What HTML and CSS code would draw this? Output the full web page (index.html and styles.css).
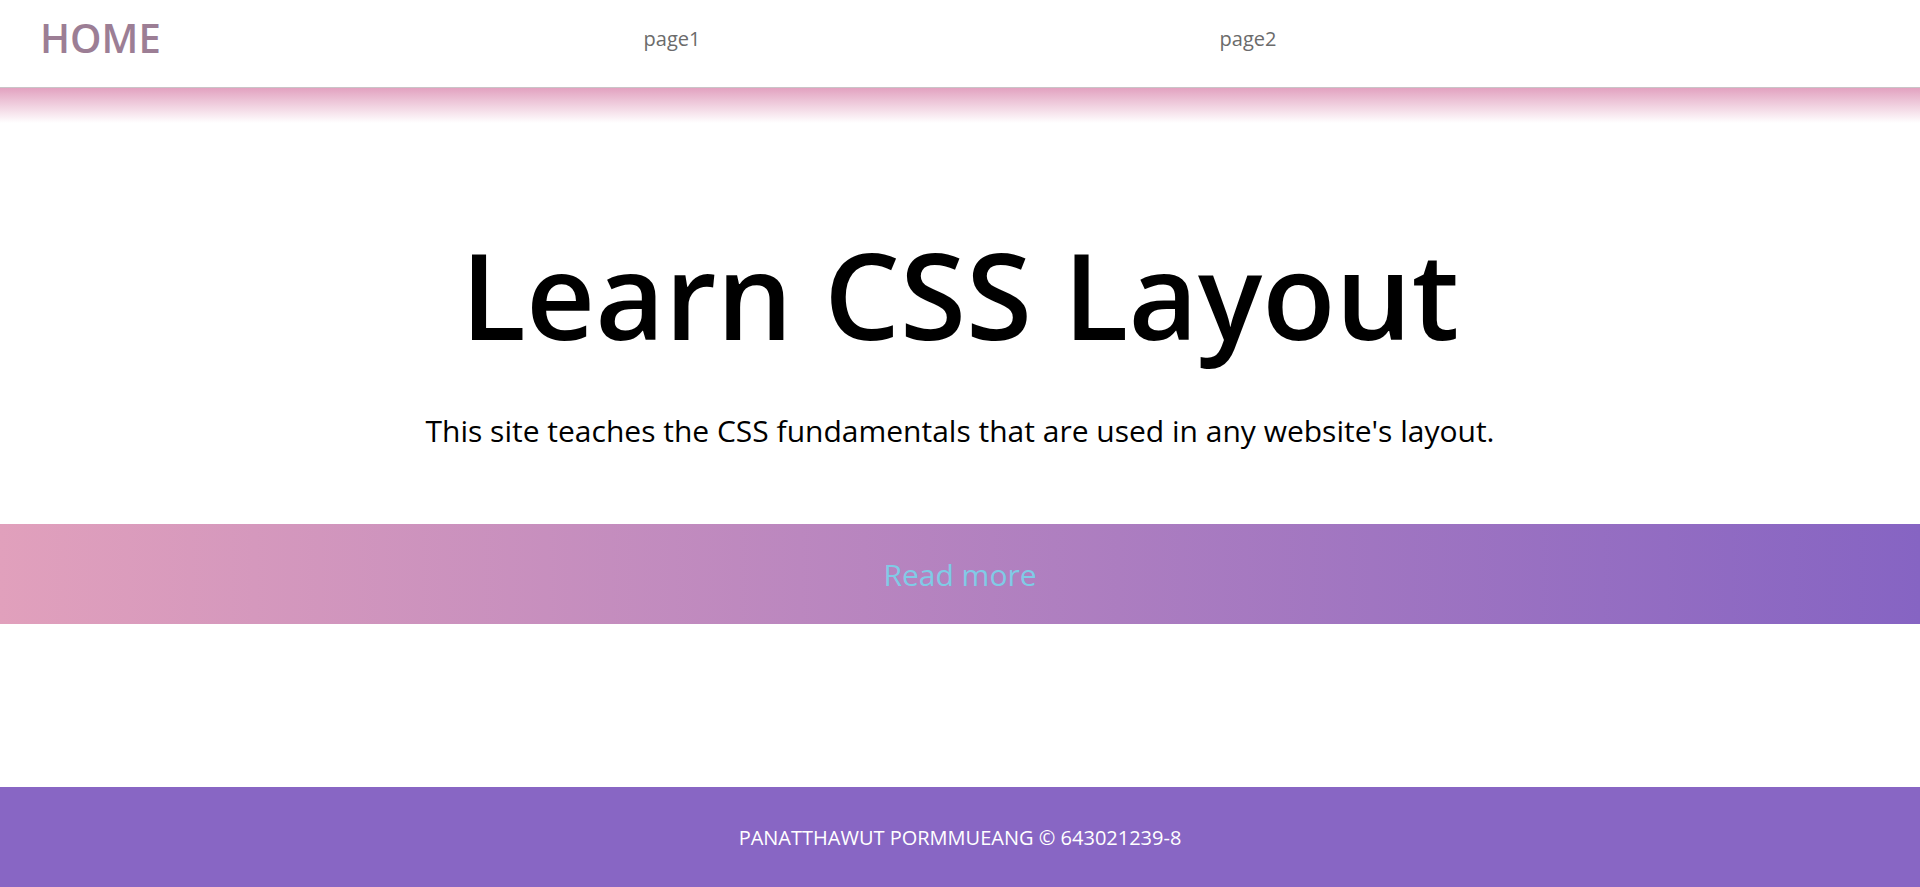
FILE: index.html
```html
<!DOCTYPE html>
<html lang="en">
<head>
<meta charset="utf-8">
<title>Learn CSS Layout</title>
<link rel="stylesheet" href="styles.css">
</head>
<body>
<header class="site-header">
  <a class="brand" href="#">HOME</a>
  <a class="nav-link" href="#">page1</a>
  <a class="nav-link" href="#">page2</a>
  <span class="nav-spacer"></span>
</header>
<div class="header-fade"></div>
<main class="hero">
  <h1 class="hero-title">Learn CSS Layout</h1>
  <p class="hero-text">This site teaches the CSS fundamentals that are used in any website's layout.</p>
</main>
<section class="cta">
  <a class="cta-link" href="#">Read more</a>
</section>
<div class="spacer"></div>
<footer class="site-footer">
  <p class="footer-text">PANATTHAWUT PORMMUEANG © 643021239-8</p>
</footer>
</body>
</html>
```
FILE: styles.css
```css
* { box-sizing: border-box; }
html, body {
  margin: 0;
  padding: 0;
}
body {
  font-family: "Open Sans", "Liberation Sans", sans-serif;
  background: #fff;
  color: #000;
}
a { text-decoration: none; }

.site-header {
  display: grid;
  grid-template-columns: 20% 30% 30% 20%;
  align-items: center;
  height: 88px;
  padding-bottom: 10px;
  border-bottom: 1px solid #c9c4c7;
}
.brand {
  padding-left: 40px;
  font-size: 40px;
  font-weight: 600;
  color: #9c7e95;
  line-height: 1.362;
}
.nav-link {
  text-align: center;
  font-size: 20px;
  color: #6b6b6b;
  line-height: 1.362;
}

.header-fade {
  height: 35px;
  background: linear-gradient(to bottom, #e2a2c0, #ffffff);
}

.hero {
  display: flex;
  flex-direction: column;
  align-items: center;
  padding-top: 89px;
  padding-bottom: 72px;
}
.hero-title {
  margin: 0;
  font-size: 120px;
  font-weight: 600;
  line-height: 1.362;
}
.hero-text {
  margin: 36px 0 0;
  font-size: 30px;
  line-height: 1.362;
}

.cta {
  display: flex;
  justify-content: center;
  align-items: center;
  height: 100px;
  background: linear-gradient(to right, #e1a0bc, #8664c3);
}
.cta-link {
  font-size: 30px;
  color: #80cbe6;
}

.spacer {
  height: 163px;
}

.site-footer {
  display: flex;
  justify-content: center;
  align-items: center;
  height: 100px;
  background: #8866c4;
}
.footer-text {
  margin: 0;
  font-size: 20px;
  color: #fff;
}
```
